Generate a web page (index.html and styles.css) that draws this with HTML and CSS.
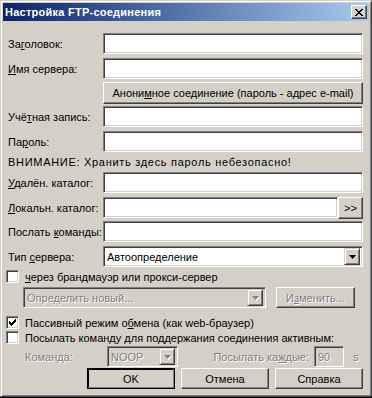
FILE: index.html
```html
<!DOCTYPE html>
<html lang="ru">
<head>
    <meta charset="UTF-8">
    <title>Настройка FTP-соединения</title>
    <link rel="stylesheet" href="styles.css">
</head>
<body>
    <div class="window">
        <div class="titlebar">
            <span class="title">Настройка FTP-соединения</span>
            <span class="close">
                <svg width="8" height="7" viewBox="0 0 8 7"><path d="M0 0h2v1h1v1h2v-1h1v-1h2v1h-1v1h-1v1h-1v1h1v1h1v1h1v1h-2v-1h-1v-1h-2v1h-1v1h-2v-1h1v-1h1v-1h1v-1h-1v-1h-1v-1h-1z" fill="#000"/></svg>
            </span>
        </div>
        <div class="content">
            <div class="row r1">
                <span class="lbl">За<u>г</u>оловок:</span>
                <div class="edit grow"></div>
            </div>
            <div class="row r2">
                <span class="lbl"><u>И</u>мя сервера:</span>
                <div class="edit grow"></div>
            </div>
            <div class="row r3">
                <span class="lbl"></span>
                <div class="btn grow">Анони<u>м</u>ное соединение (пароль - адрес e-mail)</div>
            </div>
            <div class="row r4">
                <span class="lbl">Учё<u>т</u>ная запись:</span>
                <div class="edit grow"></div>
            </div>
            <div class="row r5">
                <span class="lbl">Па<u>р</u>оль:</span>
                <div class="edit grow"></div>
            </div>
            <div class="warn">ВНИМАНИЕ: Хранить здесь пароль небезопасно!</div>
            <div class="row">
                <span class="lbl"><u>У</u>далён. каталог:</span>
                <div class="edit grow"></div>
            </div>
            <div class="row r8">
                <span class="lbl"><u>Л</u>окальн. каталог:</span>
                <div class="edit grow"></div>
                <div class="btn browse">&gt;&gt;</div>
            </div>
            <div class="row r9">
                <span class="lbl">Послать <u>к</u>оманды:</span>
                <div class="edit grow"></div>
            </div>
            <div class="row r10">
                <span class="lbl">Тип <u>с</u>ервера:</span>
                <div class="edit combo grow">
                    <span class="combo-text">Автоопределение</span>
                    <span class="drop">
                        <svg width="7" height="4" viewBox="0 0 7 4"><path d="M0 0h7l-3.5 4z" fill="#000"/></svg>
                    </span>
                </div>
            </div>
            <div class="check c1">
                <span class="box"></span>
                <span><u>ч</u>ерез брандмауэр или прокси-сервер</span>
            </div>
            <div class="row proxy">
                <div class="edit combo disabled proxy-combo">
                    <span class="combo-text">Определить новый...</span>
                    <span class="drop">
                        <svg width="7" height="4" viewBox="0 0 7 4"><path d="M0 0h7l-3.5 4z" fill="#808080"/></svg>
                    </span>
                </div>
                <div class="btn disabled change">И<u>з</u>менить...</div>
            </div>
            <div class="check c2">
                <span class="box">
                    <svg width="7" height="7" viewBox="0 0 7 7"><path d="M0 2h1v1h1v1h1v-1h1v-1h1v-1h1v-1h1v3h-1v1h-1v1h-1v1h-1v1h-1v-1h-1v-1h-1z" fill="#000"/></svg>
                </span>
                <span>Пассивный режим о<u>б</u>мена (как web-браузер)</span>
            </div>
            <div class="check c3">
                <span class="box"></span>
                <span>Посылать коман<u>д</u>у для поддержания соединения активным:</span>
            </div>
            <div class="row keep">
                <span class="sub dim">Коман<u>д</u>а:</span>
                <div class="edit combo disabled noop">
                    <span class="combo-text">NOOP</span>
                    <span class="drop">
                        <svg width="7" height="4" viewBox="0 0 7 4"><path d="M0 0h7l-3.5 4z" fill="#808080"/></svg>
                    </span>
                </div>
                <span class="every dim">Посылать ка<u>ж</u>дые:</span>
                <div class="edit disabled secs"><span class="dim">90</span></div>
                <span class="unit dim">s</span>
            </div>
            <div class="actions">
                <div class="btn default">OK</div>
                <div class="btn">Отмена</div>
                <div class="btn">Справка</div>
            </div>
        </div>
    </div>
</body>
</html>
```

FILE: styles.css
```css
body {
    margin: 0;
    background: #000;
    font-family: "Liberation Sans", Arial, sans-serif;
    font-size: 11px;
    color: #000;
}
.window {
    width: 372px;
    height: 397px;
    box-sizing: border-box;
    background: #d4d0c8;
    border: 1px solid;
    border-color: #d4d0c8 #404040 #404040 #d4d0c8;
    box-shadow: inset 1px 1px #fff, inset -1px -1px #808080;
    padding: 2px;
    display: flex;
    flex-direction: column;
}
.titlebar {
    height: 18px;
    background: linear-gradient(to right, #0a246a, #a6caf0);
    display: flex;
    align-items: center;
    justify-content: space-between;
    padding: 0 2px 0 2px;
}
.title {
    color: #fff;
    font-weight: bold;
    font-size: 11px;
    letter-spacing: 0.25px;
}
.close {
    width: 16px;
    height: 14px;
    box-sizing: border-box;
    background: #d4d0c8;
    border: 1px solid;
    border-color: #fff #404040 #404040 #fff;
    box-shadow: inset -1px -1px #808080;
    display: flex;
    align-items: center;
    justify-content: center;
}
.content {
    padding: 12px 6px 0 5px;
    display: flex;
    flex-direction: column;
}
.row {
    display: flex;
    align-items: center;
    height: 21px;
}
.r2, .r5, .r8, .r10 { margin-top: 4px; }
.r3 { margin-top: 3px; height: 22px; }
.r4 { margin-top: 2px; }
.r9 { margin-top: 3px; }
.lbl {
    width: 95px;
    flex: none;
    white-space: nowrap;
}
.grow { flex: 1; }
.edit {
    height: 21px;
    box-sizing: border-box;
    background: #fff;
    border: 1px solid;
    border-color: #808080 #fff #fff #808080;
    box-shadow: inset 1px 1px #404040, inset -1px -1px #d4d0c8;
    display: flex;
    align-items: center;
}
.btn {
    height: 100%;
    box-sizing: border-box;
    background: #d4d0c8;
    border: 1px solid;
    border-color: #fff #404040 #404040 #fff;
    box-shadow: inset -1px -1px #808080;
    display: flex;
    align-items: center;
    justify-content: center;
    white-space: nowrap;
}
.warn {
    height: 20px;
    line-height: 20px;
    letter-spacing: 0.7px;
}
.browse {
    width: 25px;
    height: 22px;
    flex: none;
    margin-top: 1px;
}
.combo-text {
    flex: 1;
    padding-left: 3px;
    white-space: nowrap;
}
.drop {
    width: 16px;
    height: 17px;
    box-sizing: border-box;
    margin-right: 2px;
    background: #d4d0c8;
    border: 1px solid;
    border-color: #d4d0c8 #404040 #404040 #d4d0c8;
    box-shadow: inset 1px 1px #fff, inset -1px -1px #808080;
    display: flex;
    align-items: center;
    justify-content: center;
}
.check {
    display: flex;
    align-items: center;
    height: 13px;
    margin-left: -2px;
    gap: 6px;
    white-space: nowrap;
}
.c1 { margin-top: 3px; }
.c2 { margin-top: 8px; }
.c3 { margin-top: 2px; }
.box {
    width: 13px;
    height: 13px;
    box-sizing: border-box;
    flex: none;
    background: #fff;
    border: 1px solid;
    border-color: #808080 #fff #fff #808080;
    box-shadow: inset 1px 1px #404040, inset -1px -1px #d4d0c8;
    display: flex;
    align-items: center;
    justify-content: center;
}
.proxy { margin-top: 4px; }
.proxy-combo {
    width: 243px;
    margin-left: 15px;
}
.disabled { background: #d4d0c8; }
.disabled .combo-text, .dim, .btn.disabled {
    color: #808080;
    text-shadow: 1px 1px #fff;
}
.disabled .drop svg { filter: drop-shadow(1px 1px 0 #fff); }
.change {
    width: 79px;
    height: 21px;
    margin-left: 10px;
}
.keep { margin-top: 2px; }
.sub {
    width: 82px;
    padding-left: 17px;
    flex: none;
}
.noop { width: 71px; }
.every {
    width: 131px;
    text-align: right;
    flex: none;
}
.secs {
    width: 30px;
    margin-left: 5px;
    padding-left: 3px;
}
.unit { margin-left: 9px; }
.actions {
    display: flex;
    justify-content: flex-end;
    gap: 6px;
    height: 21px;
    margin-top: 1px;
}
.actions .btn {
    width: 88px;
}
.actions .default {
    outline: 1px solid #000;
    outline-offset: -1px;
    box-shadow: inset -1px -1px #808080, inset 1px 1px #000;
}
```
